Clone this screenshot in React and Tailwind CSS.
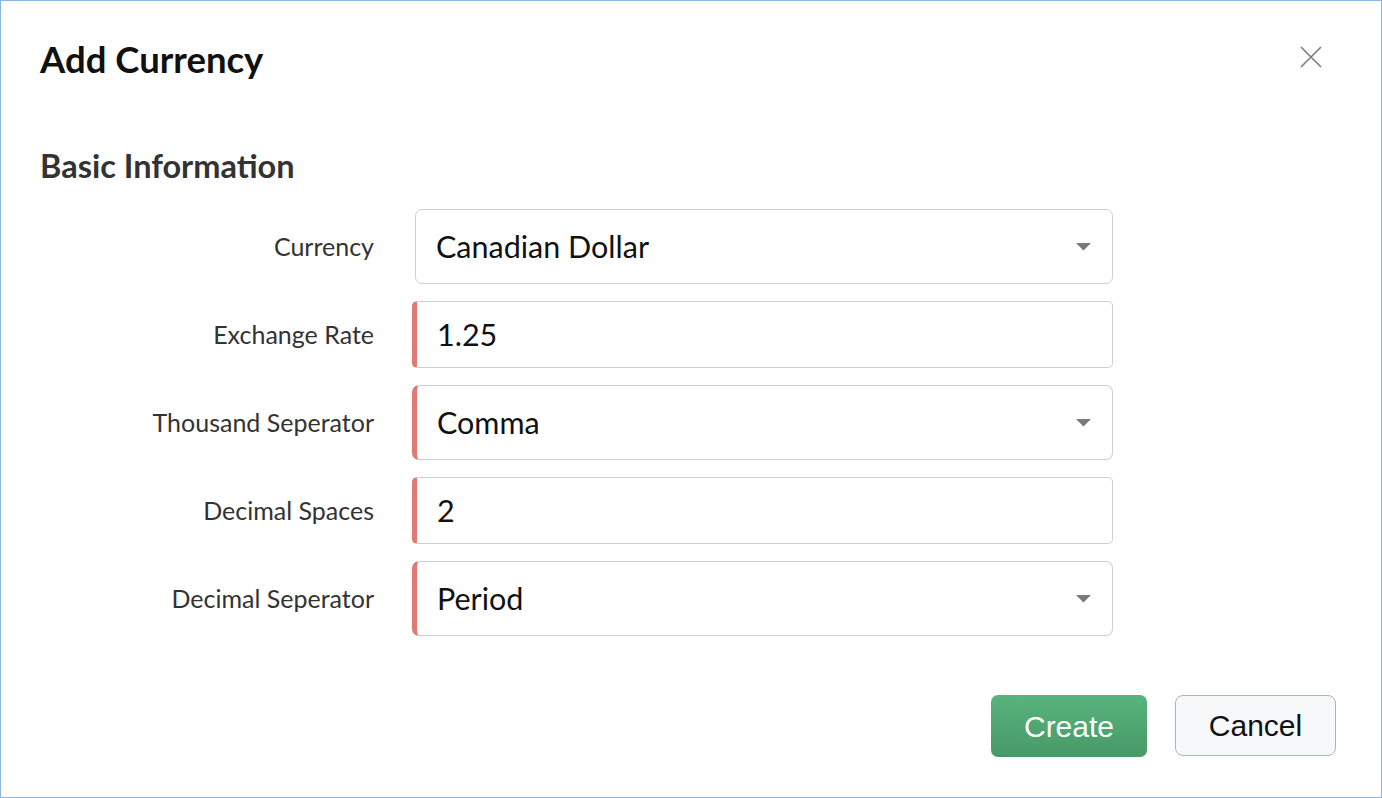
import React from 'react';

const fields = [
  { label: 'Currency', value: 'Canadian Dollar', select: true, required: false },
  { label: 'Exchange Rate', value: '1.25', select: false, required: true },
  { label: 'Thousand Seperator', value: 'Comma', select: true, required: true },
  { label: 'Decimal Spaces', value: '2', select: false, required: true },
  { label: 'Decimal Seperator', value: 'Period', select: true, required: true },
];

const Caret = () => (
  <svg width="15" height="8" viewBox="0 0 15 8" className="shrink-0">
    <path d="M0 0 H15 L7.5 7.5 Z" fill="#7a7a7a" />
  </svg>
);

const Field = ({ label, value, select, required }) => (
  <div className="flex items-center">
    <div className="w-[334px] shrink-0 text-right text-[25px] text-[#333]">{label}</div>
    <div className="ml-[38px] w-[701px]">
      <div
        className={`flex items-center bg-white border border-[#cfcfcf] ${
          select ? 'h-[75px] rounded-[7px]' : 'h-[67px] rounded-[5px] border-[#c6c6c6]'
        } ${required ? 'border-l-[5px] border-l-[#e07a72]' : 'ml-[3px]'} pl-[20px] pr-[21px]`}
      >
        <span className="flex-1 text-[30.5px] text-[#111]">{value}</span>
        {select && <Caret />}
      </div>
    </div>
  </div>
);

export default function App() {
  return (
    <div
      className="w-[1382px] h-[798px] border border-[#8db4e2] bg-white flex flex-col"
      style={{ fontFamily: 'Lato, "Open Sans", sans-serif' }}
    >
      <div className="flex items-start justify-between pl-[39px] pr-[58px] pt-[36px]">
        <h1 className="text-[36.5px] font-bold text-[#111] leading-[44px]">Add Currency</h1>
        <button className="mt-[8px] text-[#777]">
          <svg width="24" height="24" viewBox="0 0 24 24" fill="none" stroke="#7a7a7a" strokeWidth="1.6">
            <path d="M2 2 L22 22 M22 2 L2 22" />
          </svg>
        </button>
      </div>

      <h2 className="pl-[39px] mt-[66px] text-[32.5px] font-bold text-[#333] leading-[38px]">Basic Information</h2>

      <div className="mt-[24px] pl-[39px] flex flex-col gap-[17px]">
        {fields.map((f) => (
          <Field key={f.label} {...f} />
        ))}
      </div>

      <div className="mt-[59px] flex justify-end gap-[28px] pr-[45px]" style={{ fontFamily: '"Liberation Sans", Arial, sans-serif' }}>
        <button className="w-[156px] h-[62px] rounded-[7px] bg-gradient-to-b from-[#58b37d] to-[#479a67] text-white text-[30px]">
          Create
        </button>
        <button className="w-[161px] h-[61px] rounded-[8px] bg-[#f7f8fa] border border-[#aab3c5] text-[#111] text-[30px]">
          Cancel
        </button>
      </div>
    </div>
  );
}
